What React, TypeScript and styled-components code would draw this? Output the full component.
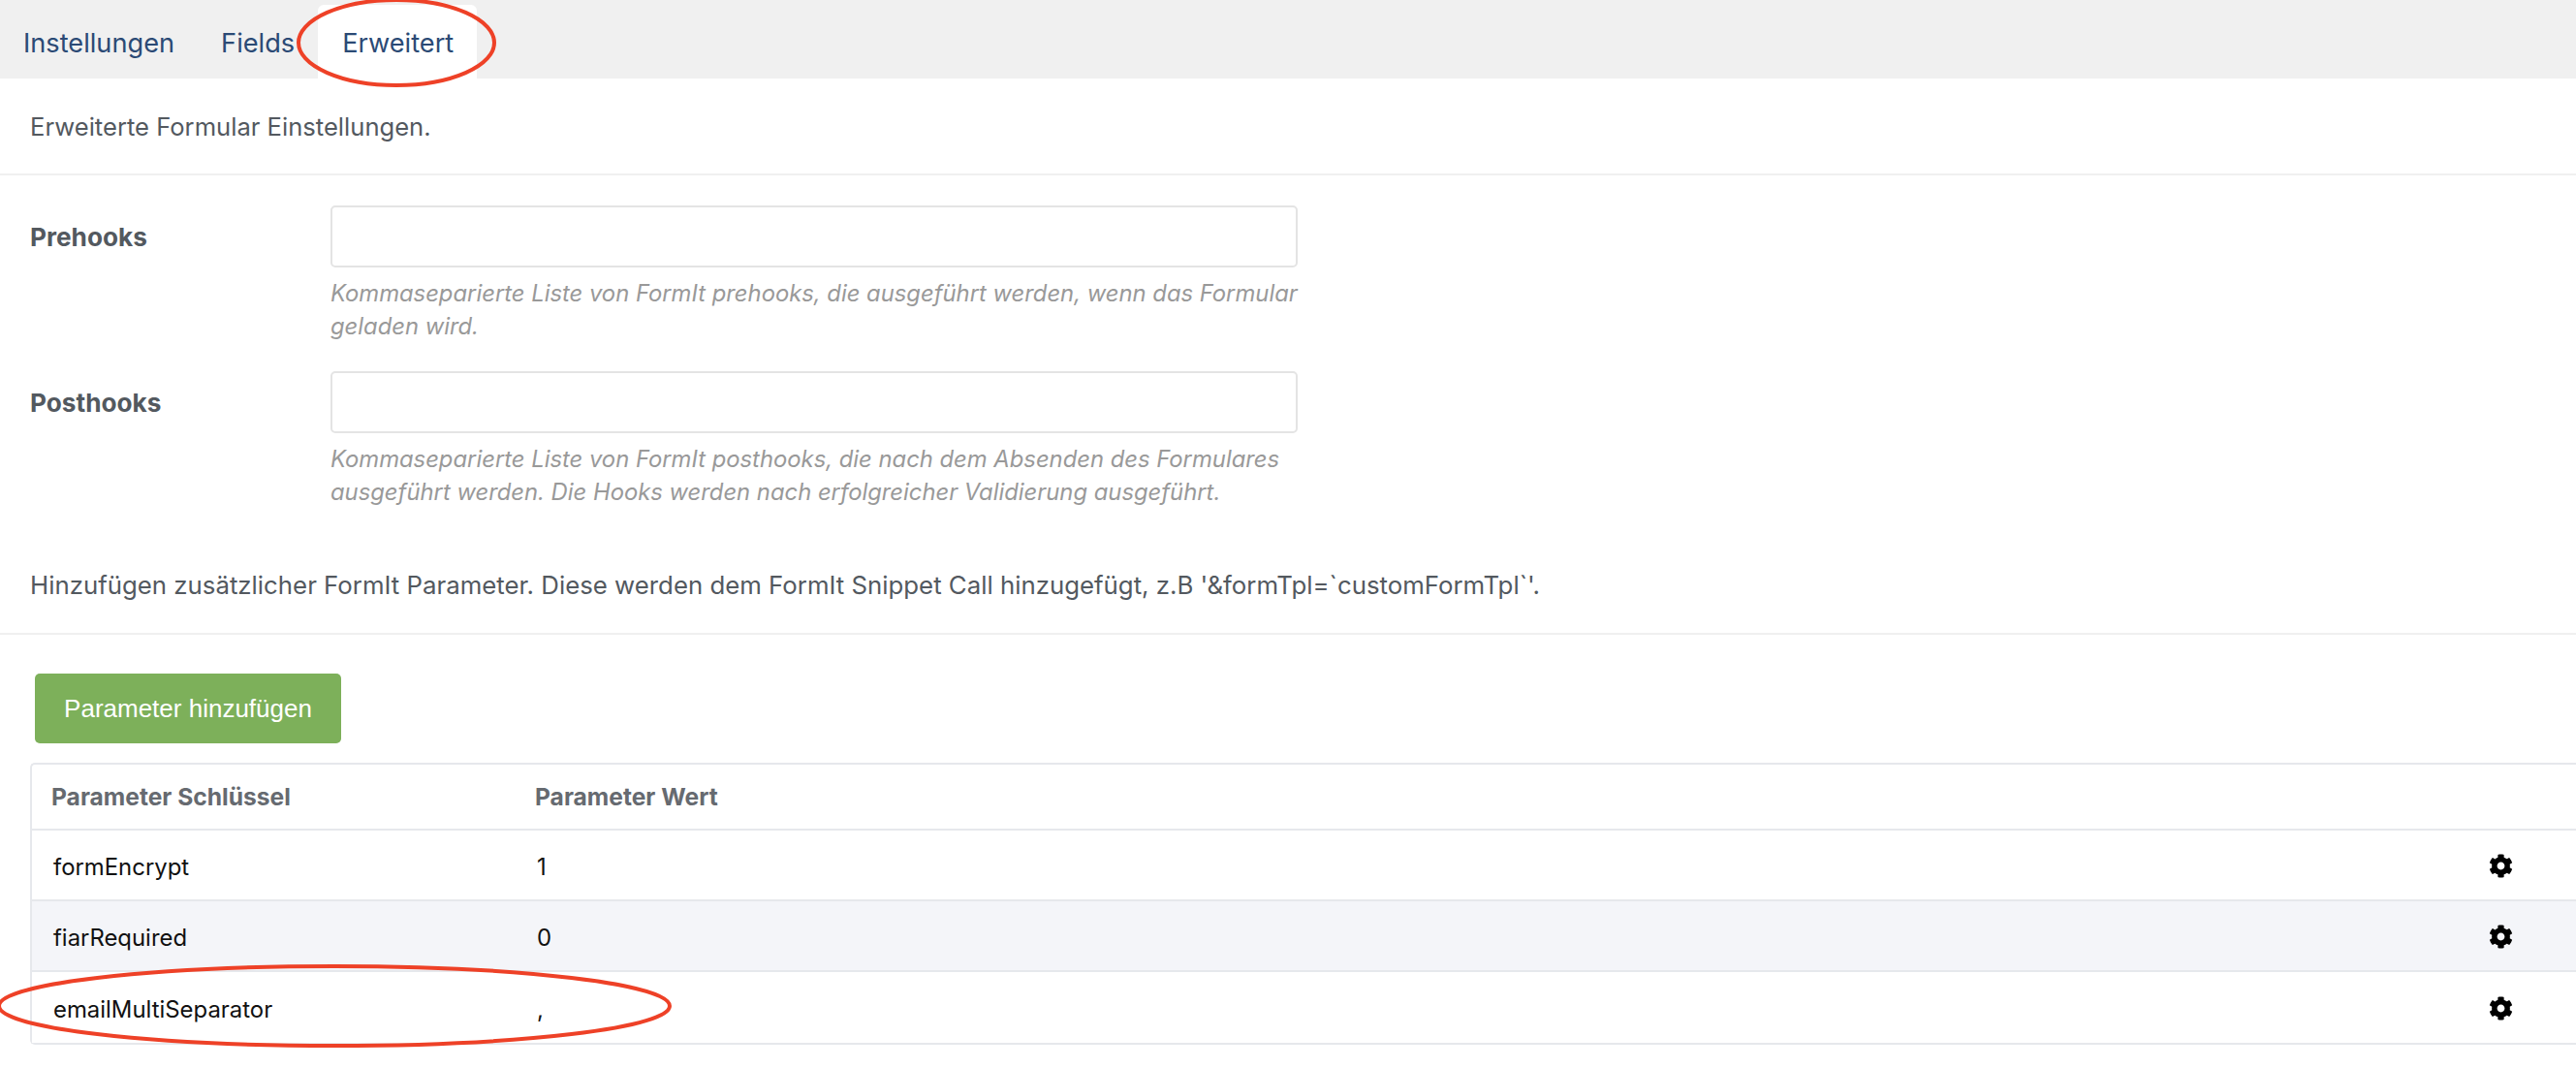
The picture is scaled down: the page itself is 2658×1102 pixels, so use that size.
import { createGlobalStyle, styled } from "styled-components";
import { FaCog } from "react-icons/fa";

const GlobalStyle = createGlobalStyle`
  html, body {
    margin: 0;
    padding: 0;
    background: #fff;
  }
  body {
    font-family: Inter, "Liberation Sans", sans-serif;
    color: #53595f;
    overflow: hidden;
  }
`;

const Page = styled.div`
  position: relative;
  width: 2658px;
  height: 1102px;
  overflow: hidden;
  background: #fff;
`;

const TabBar = styled.nav`
  display: flex;
  align-items: flex-end;
  height: 81px;
  background: #f0f0f0;
`;

const Tab = styled.a<{ $active?: boolean }>`
  display: flex;
  align-items: center;
  height: ${(p) => (p.$active ? "76px" : "81px")};
  padding: ${(p) => (p.$active ? "2px 24px 0 25px" : "7px 24px 0 24px")};
  box-sizing: border-box;
  font-size: 27.2px;
  color: #2b4a75;
  background: ${(p) => (p.$active ? "#fff" : "transparent")};
  border-radius: 6px 6px 0 0;
`;

const Panel = styled.main`
  background: #fff;
  border-radius: 8px 0 0 0;
`;

const Intro = styled.p<{ $height: number; $top?: number; $size: number }>`
  display: flex;
  align-items: center;
  margin: 0;
  height: ${(p) => p.$height}px;
  padding: ${(p) => p.$top ?? 0}px 31px 0;
  box-sizing: border-box;
  font-size: ${(p) => p.$size}px;
  white-space: nowrap;
  color: #53595f;
  border-bottom: 2px solid #f0f0f0;
`;

const Form = styled.section`
  display: flex;
  flex-direction: column;
  gap: 29px;
  padding: 31px 31px 0;
`;

const FormRow = styled.div`
  display: grid;
  grid-template-columns: 310px 998px;
`;

const Label = styled.label`
  font-size: 26.2px;
  font-weight: 700;
  color: #53595f;
  line-height: 66px;
`;

const Input = styled.input`
  display: block;
  width: 100%;
  height: 64px;
  box-sizing: border-box;
  background: #fff;
  border: 2px solid #e4e4e4;
  border-radius: 5px;
`;

const Hint = styled.p`
  margin: 10px 0 0;
  font-size: 23.8px;
  line-height: 34px;
  font-style: italic;
  color: #999;
`;

const AddButton = styled.button`
  display: block;
  width: 316px;
  height: 72px;
  margin: 40px 0 20px 36px;
  padding: 0;
  border: 0;
  border-radius: 5px;
  background: #7db05a;
  color: #fff;
  font-family: "Liberation Sans", Arial, sans-serif;
  font-size: 26px;
`;

const Table = styled.table`
  width: 2640px;
  margin-left: 31px;
  border-collapse: separate;
  border-spacing: 0;
  table-layout: fixed;
  border: 2px solid #e6e8ec;
  border-right: 0;
  border-radius: 5px 0 0 5px;
`;

const HeadCell = styled.th`
  height: 68px;
  padding: 0 0 0 20px;
  box-sizing: border-box;
  text-align: left;
  font-size: 24.6px;
  font-weight: 700;
  color: #666a70;
  border-bottom: 2px solid #e6e8ec;
`;

const Row = styled.tr<{ $striped?: boolean }>`
  background: ${(p) => (p.$striped ? "#f4f5f9" : "#fff")};
`;

const Cell = styled.td<{ $last?: boolean }>`
  height: 73px;
  padding: 3px 0 0 22px;
  box-sizing: border-box;
  font-size: 23.9px;
  color: #111;
  border-bottom: ${(p) => (p.$last ? "0" : "2px solid #e6e8ec")};
`;

const GearButton = styled.span`
  display: block;
  margin: -2px 0 0 14px;
  font-size: 25px;
  line-height: 0;
  color: #000;
`;

const Annotation = styled.svg`
  position: absolute;
  left: 0;
  top: 0;
  pointer-events: none;
`;

const params = [
  { key: "formEncrypt", value: "1" },
  { key: "fiarRequired", value: "0" },
  { key: "emailMultiSeparator", value: "," },
];

export default function App() {
  return (
    <Page>
      <GlobalStyle />
      <TabBar>
        <Tab>Instellungen</Tab>
        <Tab>Fields</Tab>
        <Tab $active>Erweitert</Tab>
      </TabBar>
      <Panel>
        <Intro $height={100} $size={25.6}>Erweiterte Formular Einstellungen.</Intro>
        <Form>
          <FormRow>
            <Label>Prehooks</Label>
            <div>
              <Input />
              <Hint>
                Kommaseparierte Liste von FormIt prehooks, die ausgeführt werden, wenn das Formular
                geladen wird.
              </Hint>
            </div>
          </FormRow>
          <FormRow>
            <Label>Posthooks</Label>
            <div>
              <Input />
              <Hint>
                Kommaseparierte Liste von FormIt posthooks, die nach dem Absenden des Formulares
                ausgeführt werden. Die Hooks werden nach erfolgreicher Validierung ausgeführt.
              </Hint>
            </div>
          </FormRow>
        </Form>
        <Intro $height={130} $top={28} $size={25.8}>
          Hinzufügen zusätzlicher FormIt Parameter. Diese werden dem FormIt Snippet Call hinzugefügt, z.B '&amp;formTpl=`customFormTpl`'.
        </Intro>
        <AddButton>Parameter hinzufügen</AddButton>
        <Table>
          <colgroup>
            <col width="499" />
            <col width="2000" />
            <col />
          </colgroup>
          <thead>
            <tr>
              <HeadCell>Parameter Schlüssel</HeadCell>
              <HeadCell>Parameter Wert</HeadCell>
              <HeadCell />
            </tr>
          </thead>
          <tbody>
            {params.map((p, i) => (
              <Row key={p.key} $striped={i === 1}>
                <Cell $last={i === 2}>{p.key}</Cell>
                <Cell $last={i === 2}>{p.value}</Cell>
                <Cell $last={i === 2}>
                  <GearButton>
                    <FaCog />
                  </GearButton>
                </Cell>
              </Row>
            ))}
          </tbody>
        </Table>
      </Panel>
      <Annotation width="2658" height="1102" viewBox="0 0 2658 1102">
        <ellipse cx="409" cy="44" rx="101" ry="44" fill="none" stroke="#ee4127" strokeWidth="4" />
        <ellipse cx="345" cy="1038" rx="346" ry="41" fill="none" stroke="#ee4127" strokeWidth="4" />
      </Annotation>
    </Page>
  );
}
